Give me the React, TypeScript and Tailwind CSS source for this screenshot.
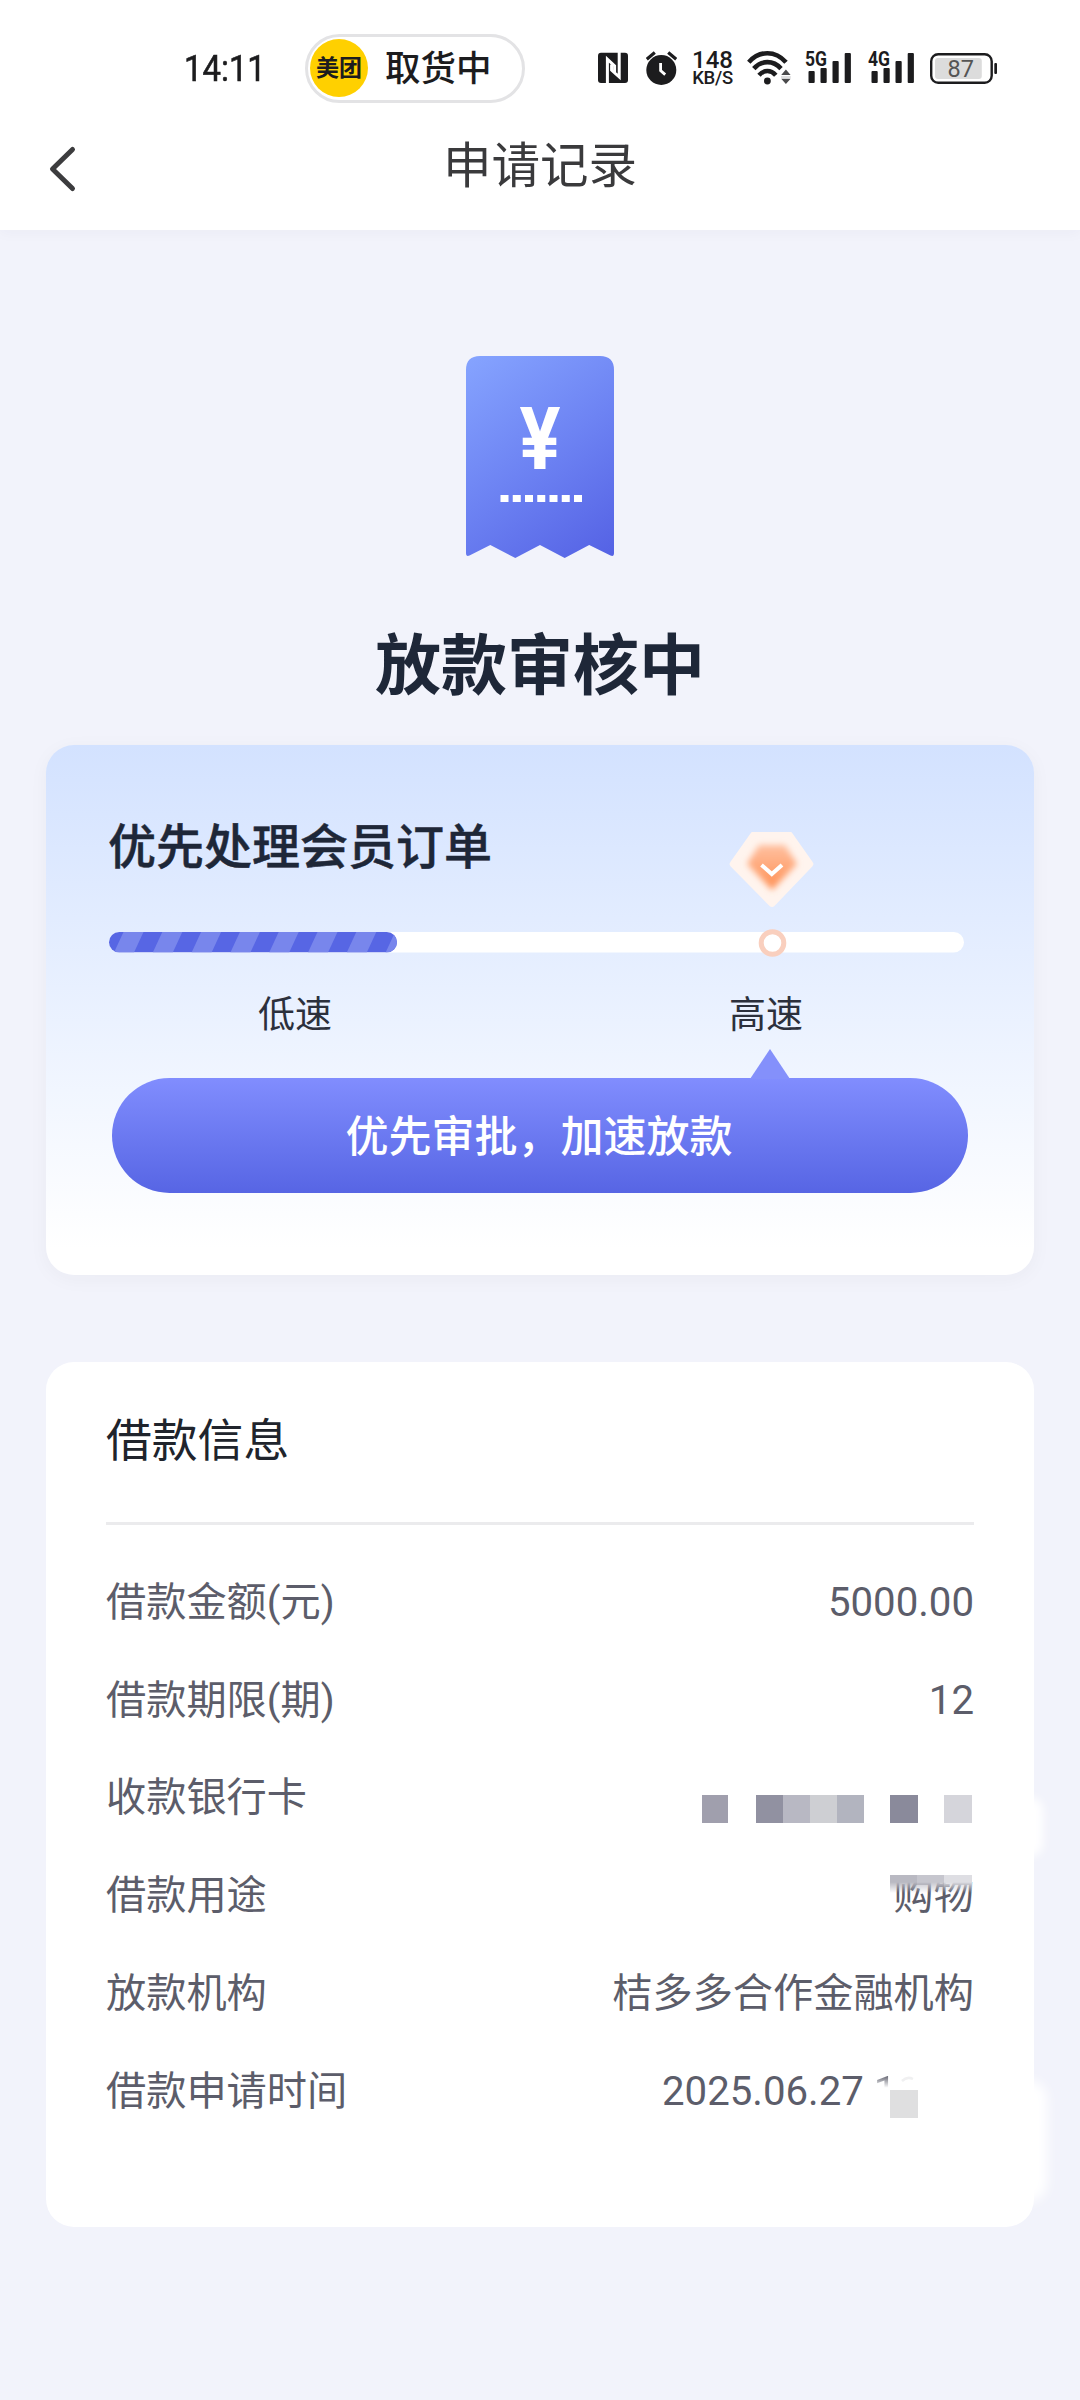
import React from 'react';

const INK = '#1c1c1e';

const NfcIcon: React.FC = () => (
    <svg width="30" height="36" viewBox="0 0 30 36" className="shrink-0">
        <rect x="0" y="2.7" width="30" height="30.3" rx="3" fill={INK} />
        <path d="M9.4 33.5V9.2L16.6 16V22" fill="none" stroke="#fff" strokeWidth="3" />
        <path d="M21.2 2V27L13.6 20.2V14.5" fill="none" stroke="#fff" strokeWidth="3" />
    </svg>
);

const AlarmIcon: React.FC = () => (
    <svg width="31" height="36" viewBox="0 0 31 36" className="shrink-0">
        <circle cx="15.3" cy="20" r="15" fill={INK} />
        <path d="M.8 9.2L8.8 2.6M30.2 9.2L22.2 2.6" stroke={INK} strokeWidth="3.2" />
        <path d="M14.6 13V20.6L19.2 24.6" fill="none" stroke="#fff" strokeWidth="2.8" />
    </svg>
);

const WifiIcon: React.FC = () => (
    <svg width="44" height="36" viewBox="0 0 44 36" className="shrink-0">
        <g fill="none" stroke={INK} strokeWidth="4.6">
            <path d="M1.8 12.2C12.5.2 28.3.2 39 12.2" />
            <path d="M6.8 18.6C14.5 10 26.3 10 34 18.6" />
            <path d="M12 25.2C17 19.6 23.8 19.6 28.8 25.2" />
        </g>
        <circle cx="20.4" cy="31" r="3.4" fill={INK} />
        <path d="M34.2 25L38.9 19.6L43.6 25ZM34.2 28.8L38.9 34L43.6 28.8Z" fill="#4a4a4c" />
        <path d="M34 27H43.8" stroke="#d4d4d6" strokeWidth="1.5" />
    </svg>
);

const SignalIcon: React.FC<{ label: string }> = ({ label }) => (
    <svg width="46" height="36" viewBox="0 0 46 36" className="shrink-0 overflow-visible">
        <text x="0" y="16.2" fontSize="21" fontWeight="700" fill={INK} textLength="22" lengthAdjust="spacingAndGlyphs">
            {label}
        </text>
        <rect x="3.5" y="21" width="6.2" height="12" rx="1" fill={INK} />
        <rect x="15.5" y="18" width="6.2" height="15" rx="1" fill={INK} />
        <rect x="27.5" y="11" width="6.2" height="22" rx="1" fill={INK} />
        <rect x="39.7" y="3" width="6.2" height="30" rx="1" fill={INK} />
    </svg>
);

const BatteryIcon: React.FC = () => (
    <svg width="67" height="36" viewBox="0 0 67 36" className="shrink-0">
        <rect x="1.2" y="4.2" width="60.5" height="28.6" rx="7" fill="#fff" stroke={INK} strokeWidth="2.4" />
        <rect x="5" y="8" width="46.8" height="21" rx="3" fill="#dcdcdc" />
        <rect x="64.3" y="13" width="2.7" height="11" rx="1" fill={INK} />
        <text x="30.8" y="27" fontSize="23.5" fill="#555" textAnchor="middle">87</text>
    </svg>
);

const StatusBar: React.FC = () => (
    <div className="flex h-[136px] items-center text-[#1c1c1e]">
        <div className="ml-[184px] w-[121px] pt-[3px] text-[36.5px] leading-none">
            <span className="inline-block origin-left scale-x-90 [-webkit-text-stroke:0.6px_#1c1c1e]">14:11</span>
        </div>
        <div className="flex h-[69px] w-[220px] shrink-0 items-center rounded-full border-[3px] border-[#e3e3e5] bg-white pl-[2px]">
            <div className="flex h-[58px] w-[58px] items-center justify-center rounded-full bg-[#ffd000] text-[23px] font-bold leading-none">
                美团
            </div>
            <span className="ml-[17px] pt-[4px] text-[35.5px] font-medium leading-none">取货中</span>
        </div>
        <div className="ml-[73px] flex items-center">
            <NfcIcon />
            <div className="ml-[18px]"><AlarmIcon /></div>
            <div className="ml-[14px] flex w-[43px] flex-col items-center pt-[2px] font-medium">
                <span className="text-[24px] leading-[19px]">148</span>
                <span className="text-[18.5px] leading-[17px] tracking-[-0.3px]">KB/S</span>
            </div>
            <div className="ml-[13px]"><WifiIcon /></div>
            <div className="ml-[14px]"><SignalIcon label="5G" /></div>
            <div className="ml-[17px]"><SignalIcon label="4G" /></div>
            <div className="ml-[16px]"><BatteryIcon /></div>
        </div>
    </div>
);

const NavBar: React.FC = () => (
    <div className="flex h-[94px] items-start px-[46px]">
        <svg width="32" height="66" viewBox="0 0 32 66">
            <path d="M26.5 13.5L6.5 33L26.5 52.5" fill="none" stroke="#3c3c3e" strokeWidth="5" strokeLinecap="round" strokeLinejoin="round" />
        </svg>
        <h1 className="flex-1 pr-[32px] text-center text-[48.5px] leading-[62px] text-[#3a3a3c]">申请记录</h1>
    </div>
);

const Receipt: React.FC = () => (
    <svg width="148" height="203" viewBox="0 0 148 203">
        <defs>
            <linearGradient id="receipt" x1="0" y1="0" x2="148" y2="203" gradientUnits="userSpaceOnUse">
                <stop offset="0" stopColor="#86a4ff" />
                <stop offset="0.5" stopColor="#6d83f3" />
                <stop offset="1" stopColor="#5461e4" />
            </linearGradient>
        </defs>
        <path d="M0 14Q0 0 14 0H134Q148 0 148 14V197Q148 201 144.5 199.5L123.2 189L98.7 202L74 189L49.3 202L24.3 189L3.5 199.5Q0 201 0 197Z" fill="url(#receipt)" />
        <text x="53.5" y="113" fontSize="88" fontWeight="700" fill="#fff" textLength="41" lengthAdjust="spacingAndGlyphs">¥</text>
        <path d="M34.5 142.5H117" stroke="#fff" strokeWidth="7" strokeDasharray="8 4.25" />
    </svg>
);

const SpeedTrack: React.FC = () => (
    <svg width="860" height="130" viewBox="0 0 860 130">
        <defs>
            <clipPath id="fill">
                <rect x="0" y="104" width="288" height="20.5" rx="10.25" />
            </clipPath>
            <filter id="soft" x="-30%" y="-30%" width="160%" height="160%">
                <feGaussianBlur stdDeviation="3.2" />
            </filter>
            <linearGradient id="gem" x1="0" y1="0" x2="0" y2="1">
                <stop offset="0" stopColor="#ffc0a0" />
                <stop offset="1" stopColor="#ff8f52" />
            </linearGradient>
        </defs>
        <rect x="0" y="104" width="855" height="20.5" rx="10.25" fill="#fff" />
        <g clipPath="url(#fill)">
            <rect x="0" y="104" width="288" height="20.5" fill="#5766e4" />
            {[0, 1, 2, 3, 4, 5, 6, 7].map((i) => (
                <path key={i} d="M14.5 104H34.5L25 124.5H5Z" transform={`translate(${i * 38.8} 0)`} fill="#7886ec" />
            ))}
        </g>
        <circle cx="663.5" cy="115" r="11.3" fill="#fff" stroke="#f9cfbe" strokeWidth="5" />
        <path d="M643 5H682L702.8 34.5Q704 36 702.8 37.5L665 77Q663 79 661 77L622.2 37.5Q621 36 622.2 34.5Z" fill="#fff4ee" stroke="#fff4ee" strokeWidth="2" strokeLinejoin="round" />
        <path d="M650 17H676L688 36L663 62L638 36Z" fill="url(#gem)" filter="url(#soft)" />
        <path d="M652.5 37L662.8 46L673 37" fill="none" stroke="#fff" strokeWidth="4" />
    </svg>
);

const PriorityCard: React.FC = () => (
    <div className="h-[530px] rounded-[28px] bg-linear-to-b from-[#d3e2ff] to-white to-95% px-[63px] pt-[71px] shadow-[0_4px_20px_rgba(60,50,40,0.04)]">
        <h3 className="-ml-[1px] text-[48px] font-medium leading-[64px] text-[#1e2738] [-webkit-text-stroke:0.5px_#1e2738]">优先处理会员订单</h3>
        <div className="-mt-[52px]">
            <SpeedTrack />
        </div>
        <div className="mt-[32px] flex pl-[149px] text-[37px] leading-[52px] text-[#2c303c]">
            <span className="w-[471px]">低速</span>
            <span>高速</span>
        </div>
        <svg width="42" height="30" viewBox="0 0 42 30" className="ml-[640px] mt-[7px]">
            <path d="M21 0L41 30H1Z" fill="#8490fb" />
        </svg>
        <button className="-mt-[1px] ml-[3px] flex h-[115px] w-[856px] items-center justify-center rounded-full bg-linear-to-b from-[#818dfe] to-[#5765e4] pr-[2px] pt-[4px] text-[43px] font-medium text-white">
            优先审批，加速放款
        </button>
    </div>
);

const Row: React.FC<{ label: string; children: React.ReactNode }> = ({ label, children }) => (
    <div className="flex h-[97.8px] items-center justify-between text-[40.2px] leading-none text-[#5c5d6a]">
        <span>{label}</span>
        {children}
    </div>
);

const MaskedCard: React.FC = () => (
    <div className="mr-[2px] mt-[21px] flex h-[28px]">
        <i className="w-[26px] bg-[#a09fad]" />
        <i className="ml-[28px] w-[27px] bg-[#9191a1]" />
        <i className="w-[27px] bg-[#b8b8c3]" />
        <i className="w-[27px] bg-[#cecfd3]" />
        <i className="w-[27px] bg-[#b2b4bf]" />
        <i className="ml-[26px] w-[28px] bg-[#8a8a9b]" />
        <i className="ml-[26px] w-[28px] bg-[#d5d5db]" />
    </div>
);

const LoanCard: React.FC = () => (
    <div className="relative mt-[87px] h-[865px] rounded-[28px] bg-white px-[60px] pt-[48px]">
        {/* soft white spots over the right edge */}
        <div className="absolute -right-[9px] top-[435px] h-[60px] w-[28px] rounded-full bg-white blur-[5px]" />
        <div className="absolute -right-[13px] top-[718px] h-[122px] w-[38px] rounded-full bg-white blur-[6px]" />
        <h3 className="text-[45.8px] leading-[64px] text-[#20242c]">借款信息</h3>
        <div className="mb-[29px] mt-[48px] h-[3px] bg-[#ebebed]" />
        <Row label="借款金额(元)"><span>5000.00</span></Row>
        <Row label="借款期限(期)"><span>12</span></Row>
        <Row label="收款银行卡"><MaskedCard /></Row>
        <Row label="借款用途">
            <div className="relative">
                <span>购物</span>
                <div className="absolute -top-[1px] right-[2px] flex h-[18px] mask-b-from-40%">
                    <i className="w-[27px] bg-[#b9b9c2]" />
                    <i className="w-[27px] bg-[#c6c6ce]" />
                    <i className="w-[28px] bg-[#dedee3]" />
                </div>
            </div>
        </Row>
        <Row label="放款机构"><span>桔多多合作金融机构</span></Row>
        <Row label="借款申请时间">
            <div className="relative w-[312px] whitespace-pre">
                2025.06.27 <span className="bg-linear-to-b from-[#5c5d6a] from-15% to-transparent to-42% bg-clip-text text-transparent">1</span>
                <svg width="14" height="6" viewBox="0 0 14 6" className="absolute left-[239px] top-[4px]">
                    <path d="M1 5Q6 0 12 3" fill="none" stroke="#f0f0f1" strokeWidth="2.5" />
                </svg>
                <i className="absolute left-[228px] top-[18px] h-[28px] w-[28px] bg-[#dfdfe0]" />
            </div>
        </Row>
    </div>
);

const App: React.FC = () => (
    <div className="h-[2400px] w-[1080px] overflow-hidden bg-[#f2f3fb] font-['Roboto','Noto_Sans_CJK_SC',sans-serif]">
        <header className="h-[230px] bg-white shadow-[0_2px_14px_rgba(40,50,80,0.04)]">
            <StatusBar />
            <NavBar />
        </header>
        <main className="px-[46px]">
            <div className="flex flex-col items-center pt-[126px]">
                <Receipt />
                <h2 className="mb-[31px] mt-[61px] text-[66px] font-bold leading-[94px] text-[#1e2738]">放款审核中</h2>
            </div>
            <PriorityCard />
            <LoanCard />
        </main>
    </div>
);

export default App;
